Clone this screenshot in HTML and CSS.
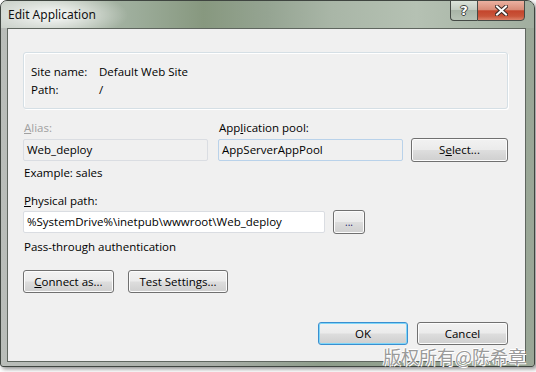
FILE: index.html
```html
<!DOCTYPE html>
<html lang="en">
<head>
    <meta charset="UTF-8">
    <meta name="viewport" content="width=device-width, initial-scale=1.0">
    <title>Edit Application</title>
    <link rel="stylesheet" href="styles.css">
</head>
<body>
    <div class="page">
        <div class="window">
            <div class="titlebar">
                <span class="title">Edit Application</span>
                <div class="caption-buttons">
                    <span class="cap-btn help">?</span>
                    <span class="cap-btn close">
                        <svg width="13" height="11" viewBox="0 0 13 11">
                            <path d="M2 1.5 L11 9.5 M11 1.5 L2 9.5" stroke="#3b2a26" stroke-width="4" stroke-linecap="square"/>
                            <path d="M2 1.5 L11 9.5 M11 1.5 L2 9.5" stroke="#fff" stroke-width="2" stroke-linecap="square"/>
                        </svg>
                    </span>
                </div>
            </div>

            <div class="client">
                <!-- Datos del sitio -->
                <div class="site-info">
                    <div class="info-row"><span class="info-label">Site name:</span><span>Default Web Site</span></div>
                    <div class="info-row"><span class="info-label">Path:</span><span>/</span></div>
                </div>

                <div class="app-grid">
                    <span class="field-label disabled"><u>A</u>lias:</span>
                    <span class="field-label">App<u>l</u>ication pool:</span>
                    <span></span>
                    <div class="textbox readonly">Web_deploy</div>
                    <div class="textbox readonly pool">AppServerAppPool</div>
                    <button class="btn select">S<u>e</u>lect...</button>
                </div>
                <p class="line hint">Example: sales</p>

                <p class="line path-label"><u>P</u>hysical path:</p>
                <div class="path-row">
                    <div class="textbox path">%SystemDrive%\inetpub\wwwroot\Web_deploy</div>
                    <button class="btn browse">...</button>
                </div>
                <p class="line auth">Pass-through authentication</p>

                <div class="action-row">
                    <button class="btn connect"><u>C</u>onnect as...</button>
                    <button class="btn test">Test Settings...</button>
                </div>

                <div class="dialog-buttons">
                    <button class="btn ok">OK</button>
                    <button class="btn cancel">Cancel</button>
                </div>
            </div>
        </div>
        <div class="watermark">版权所有@陈希章</div>
    </div>
</body>
</html>
```

FILE: styles.css
```css
/* Base */
body {
    margin: 0;
    background-color: #fff;
    font-family: "Open Sans", "Noto Sans", sans-serif;
    font-size: 11.5px;
    line-height: 18px;
    color: #000;
}
.page {
    position: relative;
    width: 536px;
    height: 372px;
}
u {
    text-decoration: underline;
    text-underline-offset: 1px;
}

/* Marco de la ventana */
.window {
    width: 533px;
    height: 365px;
    border: 1px solid #3f4540;
    border-radius: 7px 8px 3px 3px;
    display: flex;
    flex-direction: column;
    background: linear-gradient(90deg, #b9bdb9 0%, #a9aea8 40%, #8e9d8b 60%, #9aa797 100%);
    box-shadow: 2px 2px 4px rgba(0, 0, 0, 0.45);
}
.titlebar {
    height: 27px;
    flex-shrink: 0;
    display: flex;
    align-items: center;
    justify-content: space-between;
    border-radius: 6px 7px 0 0;
    background:
        radial-gradient(ellipse 75px 24px at 52px 14px, rgba(255, 255, 255, 0.95), rgba(255, 255, 255, 0) 100%),
        linear-gradient(90deg, #c4cbc3 0%, #9dad9b 25%, #87987f 38%, #95a492 50%, #a9b6a7 62%, #b5c1b3 78%, #a1ae9f 100%);
}
.title {
    padding-left: 7px;
    font-family: "Noto Sans", "Open Sans", sans-serif;
    font-size: 12px;
    color: #111;
}
.caption-buttons {
    display: flex;
    align-self: flex-start;
    margin-top: -1px;
    margin-right: 9px;
}
.cap-btn {
    height: 19px;
    display: flex;
    align-items: center;
    justify-content: center;
    border: 1px solid #454a46;
}
.help {
    width: 26px;
    border-right: none;
    border-radius: 0 0 0 4px;
    background: linear-gradient(#dbe2da 0%, #c3ccc2 45%, #a9b5a8 50%, #b7c2b6 100%);
    font-family: "DejaVu Sans", sans-serif;
    font-weight: bold;
    font-size: 13px;
    color: #fff;
    text-shadow: 1px 0 #3d423e, -1px 0 #3d423e, 0 1px #3d423e, 0 -1px #3d423e;
}
.close {
    width: 46px;
    border-radius: 0 0 4px 0;
    background: linear-gradient(#ebb1a1 0%, #d98c78 45%, #c4452c 52%, #c9553a 80%, #dc8168 100%);
}

/* Zona cliente */
.client {
    margin-left: 6px;
    width: 519px;
    height: 334px;
    box-sizing: border-box;
    border: 1px solid #5f665f;
    background-color: #f0f0f0;
    padding: 23px 17px 0 15px;
}
.client > * {
    box-sizing: border-box;
}
.site-info {
    height: 57px;
    border: 1px solid #d5dfe5;
    border-radius: 3px;
    box-shadow: inset 1px 1px 0 #fff, 1px 1px 0 #fff;
    padding: 10px 7px 0;
}
.info-row {
    display: flex;
}
.info-label {
    width: 68px;
}
.app-grid {
    display: grid;
    grid-template-columns: 195px 193px 97px;
    grid-template-rows: 18px 24px;
    row-gap: 1px;
    align-items: center;
    margin-top: 10px;
}
.field-label {
    padding-left: 1px;
}
.disabled {
    color: #a0a0a0;
}
.textbox {
    height: 22px;
    box-sizing: border-box;
    border: 1px solid #dadde2;
    border-radius: 2px;
    padding: 1px 3px 0;
    line-height: 18px;
    background-color: #fff;
    white-space: nowrap;
    overflow: hidden;
}
.readonly {
    width: 185px;
    background-color: #f0f0f0;
}
.pool {
    border-color: #b9d2ea;
}
.line {
    margin: 0;
    padding-left: 1px;
}
.hint {
    margin-top: 2px;
}
.path-label {
    margin-top: 10px;
}
.path-row {
    display: flex;
    align-items: center;
    gap: 8px;
    height: 24px;
}
.path {
    width: 302px;
}
.auth {
    margin-top: 4px;
}

/* Botones */
.btn {
    font-family: inherit;
    font-size: 11.5px;
    line-height: 16px;
    color: #000;
    height: 23px;
    padding: 0;
    border: 1px solid #707070;
    border-radius: 3px;
    background: linear-gradient(#f2f2f2 0%, #ebebeb 48%, #dddddd 52%, #cfcfcf 100%);
    box-shadow: inset 0 0 0 1px #fcfcfc;
}
.select {
    height: 24px;
}
.browse {
    width: 32px;
    height: 24px;
    font-size: 10px;
    color: #20206a;
}
.action-row {
    display: flex;
    gap: 14px;
    margin-top: 14px;
}
.connect {
    width: 91px;
}
.test {
    width: 100px;
}
.dialog-buttons {
    display: flex;
    justify-content: flex-end;
    gap: 9px;
    margin-top: 29px;
}
.ok {
    width: 90px;
    border-color: #3a8fd0;
    box-shadow: inset 0 0 0 1px #7fd6f8;
}
.cancel {
    width: 91px;
}

/* Marca de agua */
.watermark {
    position: absolute;
    left: 383px;
    top: 347px;
    font-family: "Noto Sans CJK SC", sans-serif;
    font-size: 18px;
    line-height: 18px;
    color: #9a9a9a;
    text-shadow: 1px 1px 0 #fff, -1px 0 0 #fff, 0 -1px 0 #fff;
}
```
